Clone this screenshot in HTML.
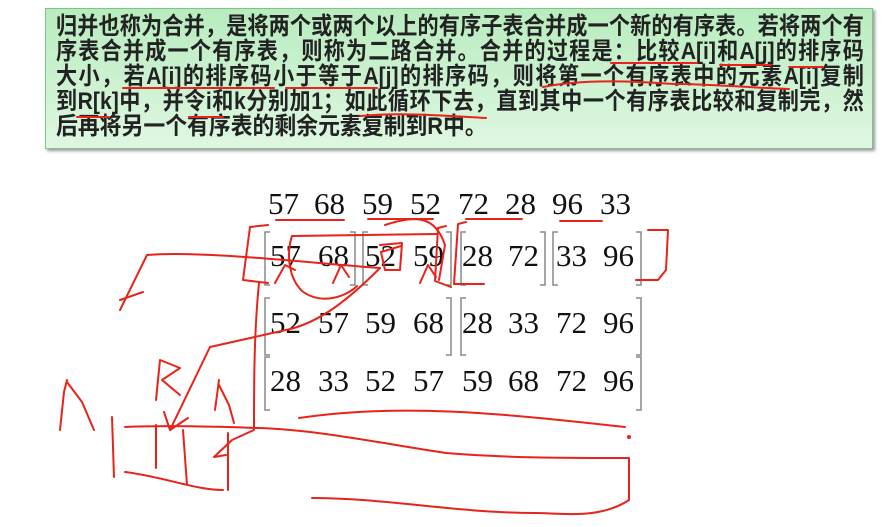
<!DOCTYPE html>
<html><head><meta charset="utf-8"><style>
body{margin:0;width:896px;height:527px;background:#fff;overflow:hidden;position:relative;font-family:"Liberation Sans","Noto Sans CJK SC",sans-serif}
.box{position:absolute;left:45px;top:8px;width:826px;height:139px;background:linear-gradient(#b8ecbe,#dff7e2);border:1px solid #7cc487;box-shadow:2px 2px 3px #999}
.ln{position:absolute;left:10px;width:918px;font-size:24px;font-weight:bold;color:#222;white-space:nowrap;text-align:justify;text-align-last:justify;line-height:25px;transform:scaleX(0.88);transform-origin:0 0}
.n{position:absolute;font-family:"Liberation Serif",serif;font-size:31px;color:#111;line-height:31px}
svg{position:absolute;left:0;top:0}
</style></head><body>
<div class="box">
<div class="ln" style="top:5px">归并也称为合并，是将两个或两个以上的有序子表合并成一个新的有序表。若将两个有</div>
<div class="ln" style="top:30px">序表合并成一个有序表，则称为二路合并。合并的过程是：比较A[i]和A[j]的排序码</div>
<div class="ln" style="top:55px">大小，若A[i]的排序码小于等于A[j]的排序码，则将第一个有序表中的元素A[i]复制</div>
<div class="ln" style="top:80px">到R[k]中，并令i和k分别加1；如此循环下去，直到其中一个有序表比较和复制完，然</div>
<div class="ln" style="top:105px;width:auto;text-align:left;text-align-last:auto;transform:scaleX(0.91)">后再将另一个有序表的剩余元素复制到R中。</div>
</div>
<div class="n" style="left:268px;top:188px">57</div><div class="n" style="left:314px;top:188px">68</div><div class="n" style="left:362px;top:188px">59</div><div class="n" style="left:410px;top:188px">52</div><div class="n" style="left:458px;top:188px">72</div><div class="n" style="left:505px;top:188px">28</div><div class="n" style="left:552px;top:188px">96</div><div class="n" style="left:600px;top:188px">33</div>
<div class="n" style="left:270px;top:240px">57</div><div class="n" style="left:318px;top:240px">68</div><div class="n" style="left:365px;top:240px">52</div><div class="n" style="left:413px;top:240px">59</div><div class="n" style="left:462px;top:240px">28</div><div class="n" style="left:508px;top:240px">72</div><div class="n" style="left:556px;top:240px">33</div><div class="n" style="left:603px;top:240px">96</div>
<div class="n" style="left:270px;top:307px">52</div><div class="n" style="left:318px;top:307px">57</div><div class="n" style="left:365px;top:307px">59</div><div class="n" style="left:413px;top:307px">68</div><div class="n" style="left:462px;top:307px">28</div><div class="n" style="left:508px;top:307px">33</div><div class="n" style="left:556px;top:307px">72</div><div class="n" style="left:603px;top:307px">96</div>
<div class="n" style="left:270px;top:365px">28</div><div class="n" style="left:318px;top:365px">33</div><div class="n" style="left:365px;top:365px">52</div><div class="n" style="left:413px;top:365px">57</div><div class="n" style="left:462px;top:365px">59</div><div class="n" style="left:508px;top:365px">68</div><div class="n" style="left:556px;top:365px">72</div><div class="n" style="left:603px;top:365px">96</div>
<svg width="896" height="527" fill="none">
<g stroke="#888" stroke-width="1.5">
<path d="M270 232h-5v53h5M350 232h5v53h-5M368 232h-5v53h5M446 232h5v53h-5M466 232h-5v53h5M540 232h5v53h-5M558 232h-5v53h5M636 232h5v53h-5"/>
<path d="M270 298h-5v57h5M446 298h5v57h-5M466 298h-5v57h5M636 298h5v57h-5"/>
<path d="M270 357h-5v53h5M636 357h5v53h-5"/>
</g>
<g stroke="#e8231a" stroke-width="2" stroke-linecap="round" stroke-linejoin="round">
<path d="M276 220h68M368 219h65M466 219h56M560 221h42"/>
<path d="M268 225l-18 2-7 53 25 3M446 226l-8 2-3 53 16 6M466 222l-8 2-4 60 30 0M648 230h20l-2 40-8 10h-22"/>
<path d="M292 236l145-2M292 236c-5 15 -5 40 10 55 20 15 45 5 55-5M380 245l22-2-2 27-15 0-4-18 20-6M385 225c30-10 50-10 60 20l-6 35M275 283l10-18 10 5M333 283l8-18 8 12M420 283l8-18 8 12"/>
<path d="M380 268c-60-4-180-18-233-13l-27 55M120 300l23-8"/>
<path d="M380 268c-30 30-60 55-94 62l-76 17-40 83M170 430l-6-18M170 430l18-12"/>
<path d="M259 283c-5 50-5 100-5 147l-22 10-18 17M214 457l12-2"/>
<path d="M67 380l-3 12-4 38M67 382l15 20 12 28M160 360l-4 40M160 360l20 8-18 12 18 15M219 380l-4 30M219 385l10 20 5 18"/>
<path d="M112 417l2 60M156 425v43M183 430l4 55M228 433v57"/>
<path d="M125 427c45-2 100 0 134 1 60 2 120 15 187 25 60 5 120 5 183 5v42c-30 20-70 13-93 13-80 0-150-15-224-15M125 472c40 5 70 18 98 18"/>
<path d="M299 418c100-15 200-5 326 9"/>
<circle cx="629" cy="437" r="1"/>
<path d="M611 63h86M720 65h51M123 88h151M286 88h91M543 87c40-8 90-6 131-3M674 84c40 0 80 4 115 5M789 67h34"/>
<path d="M77 117h32M189 117h34M360 116c40-4 90 0 126 2"/>
</g>
</svg>
</body></html>
